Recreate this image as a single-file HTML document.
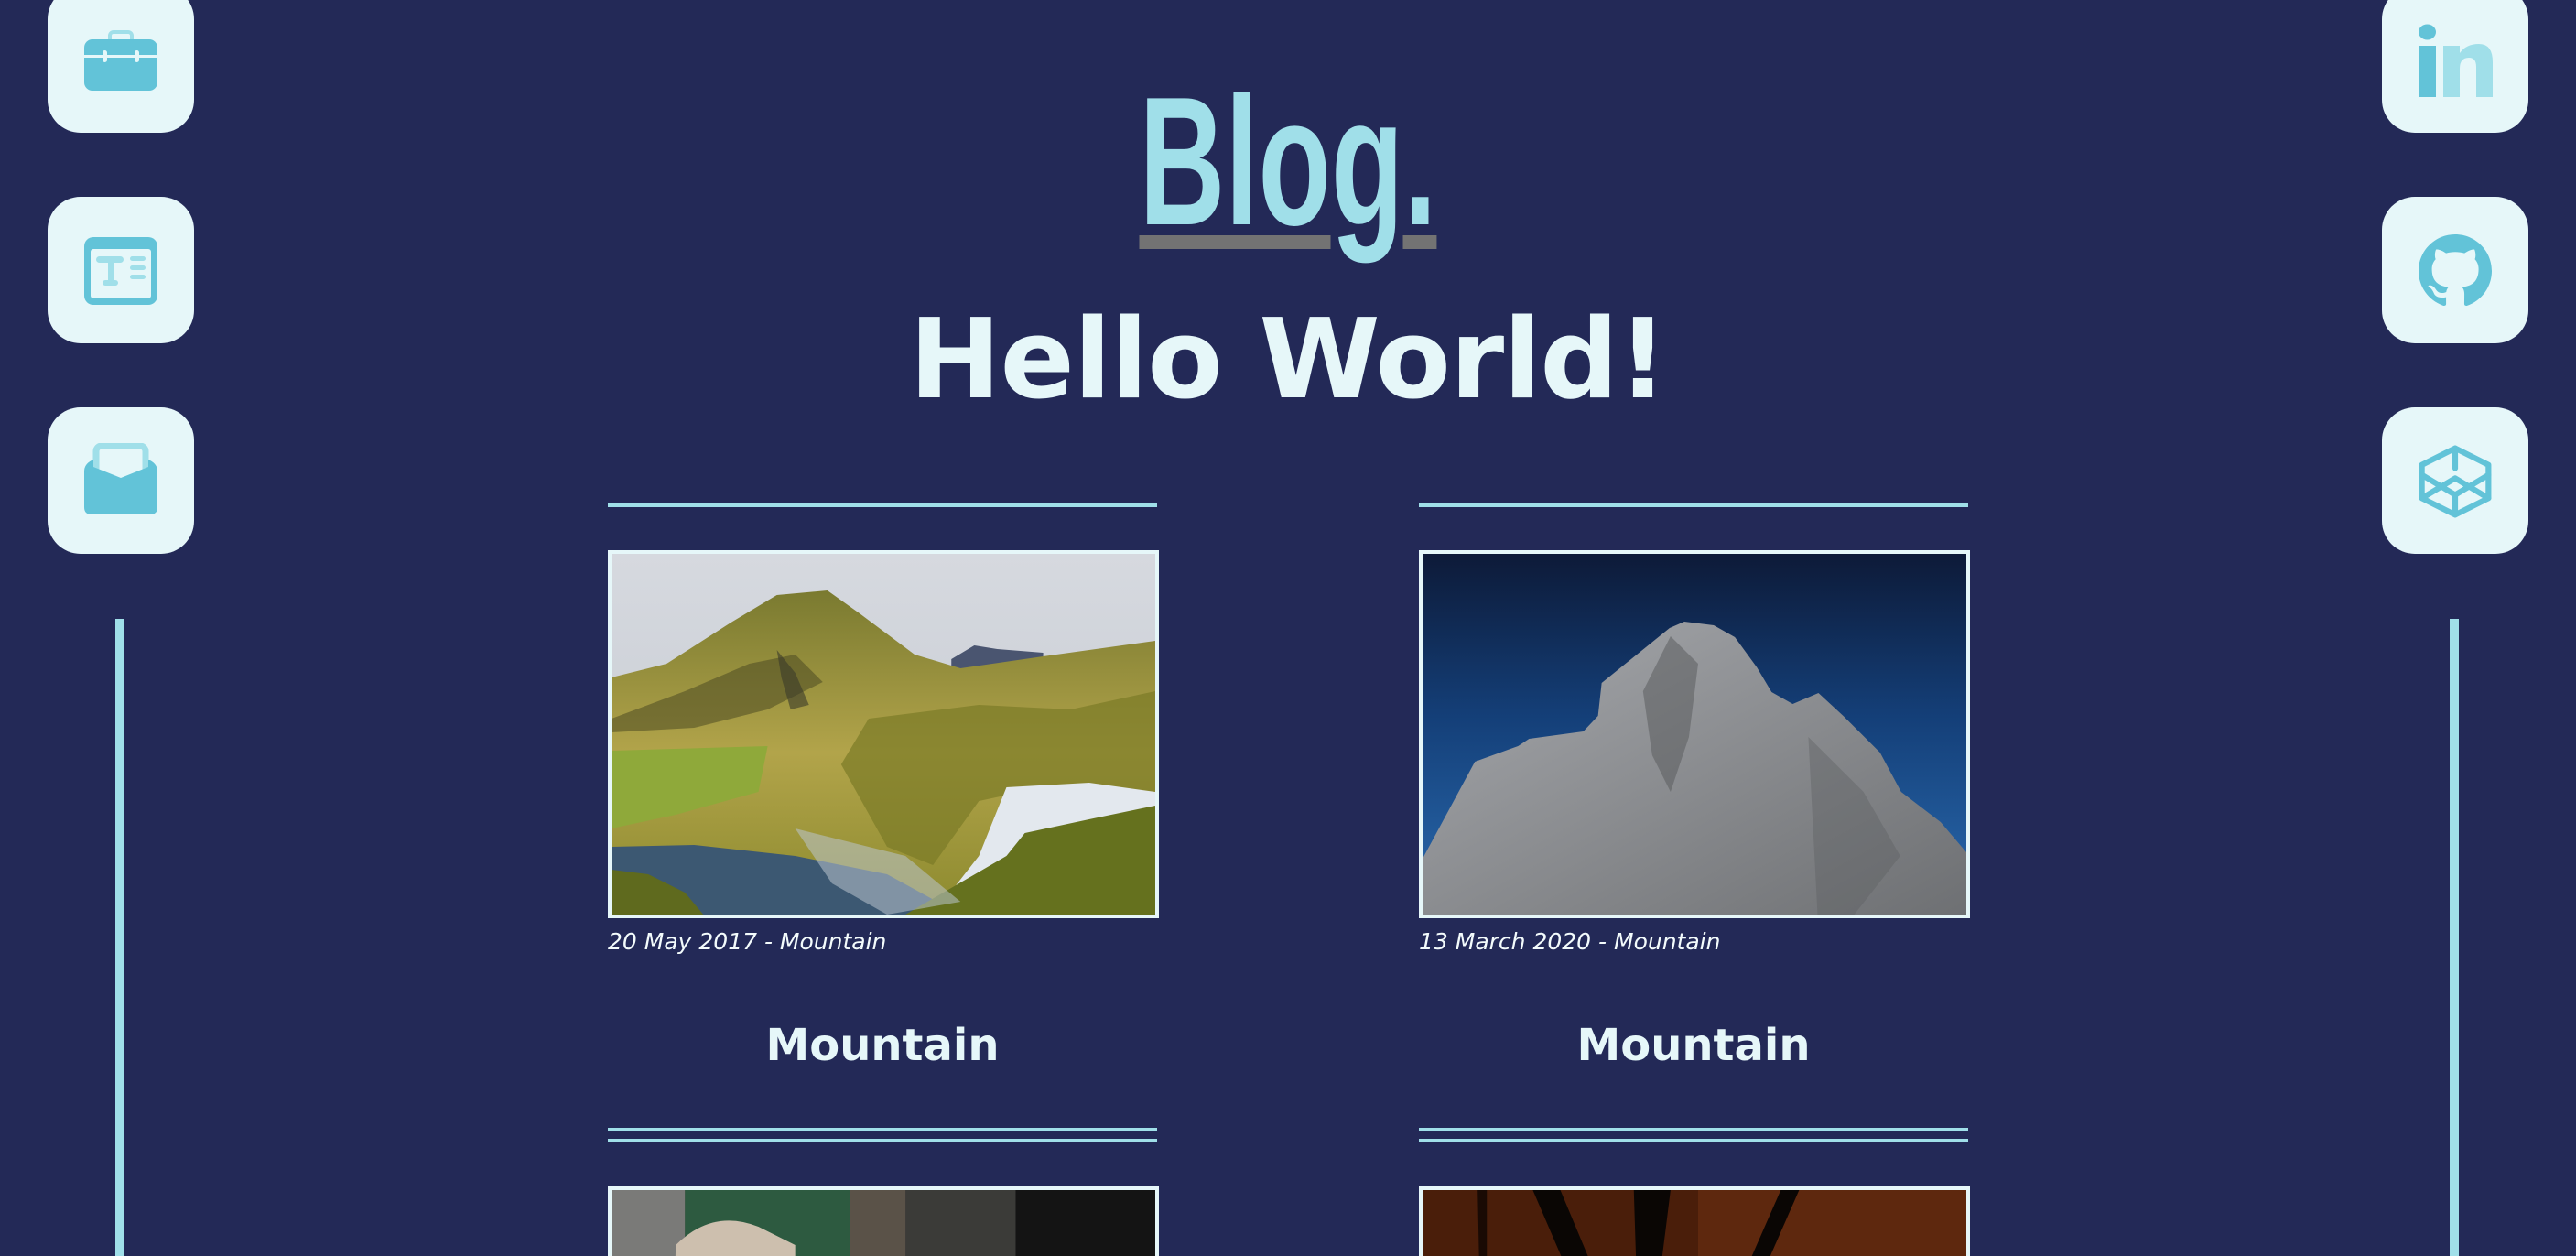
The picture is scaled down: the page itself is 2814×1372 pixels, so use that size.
<!DOCTYPE html>
<html><head><meta charset="utf-8"><style>
*{margin:0;padding:0;box-sizing:border-box}
html,body{width:2814px;height:1372px;overflow:hidden;background:#232957}
#wrap{position:relative;width:2814px;height:1372px;overflow:hidden;background:#232957}
.abs{position:absolute}
.box{position:absolute;width:160px;height:160px;border-radius:36px;background:#e6f7f9}
.vline{position:absolute;width:10px;top:676px;height:696px;background:#a0dfe9}
.hl{position:absolute;height:4px;background:#a0dfe9;width:600px}
.img{position:absolute;width:602px;height:402px;border:4px solid #e6f7f9;overflow:hidden}
.img svg{display:block;width:594px;height:394px}
.date{position:absolute;font-family:"DejaVu Sans",sans-serif;font-style:italic;font-size:25px;color:#f3fbfc;line-height:1}
.title{position:absolute;width:600px;text-align:center;font-family:"DejaVu Sans",sans-serif;font-weight:bold;font-size:48px;color:#e6f7f9;line-height:1}
</style></head><body><div id="wrap">

<div class="box" style="left:52px;top:-15px"></div>
<div class="box" style="left:52px;top:215px"></div>
<div class="box" style="left:52px;top:445px"></div>
<div class="vline" style="left:126px"></div>

<svg class="abs" style="left:92px;top:33px" width="80" height="66" viewBox="0 0 80 66">
<rect x="28" y="2" width="24" height="14" rx="4" fill="none" stroke="#a0dfe9" stroke-width="4"/>
<rect x="0" y="10" width="80" height="56" rx="9" fill="#62c3d8"/>
<rect x="0" y="27" width="80" height="3" fill="#e6f7f9"/>
<rect x="20" y="22" width="5" height="13" rx="2.5" fill="#e6f7f9"/>
<rect x="55" y="22" width="5" height="13" rx="2.5" fill="#e6f7f9"/>
</svg>

<svg class="abs" style="left:92px;top:259px" width="80" height="74" viewBox="0 0 80 74">
<rect x="0" y="0" width="80" height="74" rx="10" fill="#62c3d8"/>
<rect x="7" y="13" width="66" height="54" rx="3" fill="#e6f7f9"/>
<g fill="#a0dfe9">
<rect x="13" y="21" width="30" height="7" rx="3.5"/>
<rect x="26" y="21" width="7" height="32" rx="2"/>
<rect x="20" y="47" width="17" height="6" rx="3"/>
<rect x="50" y="21" width="17" height="5" rx="2.5"/>
<rect x="50" y="31" width="17" height="5" rx="2.5"/>
<rect x="50" y="41" width="17" height="5" rx="2.5"/>
</g>
</svg>

<svg class="abs" style="left:92px;top:484px" width="80" height="78" viewBox="0 0 80 78">
<rect x="13" y="3" width="54" height="50" rx="6" fill="#e6f7f9" stroke="#a0dfe9" stroke-width="7"/>
<path d="M8,19 L10,18 L10,26 L40,38 L70,26 L70,18 L72,19 Q80,23 80,31 L80,70 Q80,78 72,78 L8,78 Q0,78 0,70 L0,31 Q0,23 8,19 Z" fill="#62c3d8"/>
</svg>

<div class="box" style="left:2602px;top:-15px"></div>
<div class="box" style="left:2602px;top:215px"></div>
<div class="box" style="left:2602px;top:445px"></div>
<div class="vline" style="left:2676px"></div>

<svg class="abs" style="left:2642px;top:26px" width="81" height="80" viewBox="0 0 81 80">
<ellipse cx="9.5" cy="9" rx="9.5" ry="8.5" fill="#62c3d8"/>
<rect x="0" y="24" width="19" height="56" fill="#62c3d8"/>
<path d="M27,24 H45 V32 Q52,22 66,22 Q81,22 81,42 V80 H63 V47 Q63,37 55,37 Q45,37 45,49 V80 H27 Z" fill="#a0dfe9"/>
</svg>

<svg class="abs" style="left:2642px;top:256px" width="80" height="80" viewBox="0 0 16 16">
<path fill="#62c3d8" d="M8 0C3.58 0 0 3.58 0 8c0 3.54 2.29 6.53 5.47 7.59.4.07.55-.17.55-.38 0-.19-.01-.82-.01-1.49-2.01.37-2.53-.49-2.69-.94-.09-.23-.48-.94-.82-1.13-.28-.15-.68-.52-.01-.53.63-.01 1.08.58 1.23.82.72 1.21 1.87.87 2.33.66.07-.52.28-.87.51-1.070-1.78-.2-3.64-.89-3.64-3.95 0-.87.31-1.59.82-2.15-.08-.2-.36-1.02.08-2.12 0 0 .67-.21 2.2.82.64-.18 1.32-.27 2-.27.68 0 1.36.09 2 .27 1.53-1.04 2.2-.82 2.2-.82.44 1.1.16 1.92.08 2.12.51.56.82 1.27.82 2.15 0 3.07-1.87 3.75-3.65 3.95.29.25.54.73.54 1.48 0 1.07-.01 1.93-.01 2.2 0 .21.15.46.55.38A8.013 8.013 0 0016 8c0-4.42-3.58-8-8-8z"/>
</svg>

<svg class="abs" style="left:2642px;top:486px" width="80" height="80" viewBox="1 1 22 22" fill="none" stroke="#62c3d8" stroke-width="1.7" stroke-linejoin="round" stroke-linecap="round">
<polygon points="12 2 22 7 22 17 12 22 2 17 2 7 12 2"/>
<line x1="12" y1="22" x2="12" y2="16"/>
<polyline points="22 7 12 13 2 7" transform="translate(0,3)"/>
<polyline points="2 14 12 8 22 14" transform="translate(0,3)"/>
<line x1="12" y1="2" x2="12" y2="8"/>
</svg>

<div class="abs" style="left:1147px;top:77px;width:520px;text-align:center">
<span style="display:inline-block;transform:scaleX(0.65);font-family:'Liberation Sans',sans-serif;font-weight:bold;font-size:200px;line-height:1;color:#a0dfe9;text-decoration:underline;text-decoration-color:#737373;text-decoration-thickness:15px;text-underline-offset:12px;text-decoration-skip-ink:auto">Blog.</span>
</div>
<div class="abs" style="left:0;top:334px;width:2814px;text-align:center;font-family:'DejaVu Sans',sans-serif;font-weight:bold;font-size:120px;line-height:1;color:#e6f7f9;letter-spacing:-1px">Hello World!</div>

<div class="hl" style="left:664px;top:550px"></div>
<div class="img" style="left:664px;top:601px">
<svg viewBox="0 0 592 394" preserveAspectRatio="none">
<defs><linearGradient id="sk" x1="0" y1="0" x2="0" y2="1"><stop offset="0" stop-color="#d6d9df"/><stop offset="1" stop-color="#c3c8d0"/></linearGradient>
<linearGradient id="mt" x1="0" y1="0" x2="0" y2="1"><stop offset="0" stop-color="#7a7a30"/><stop offset="0.5" stop-color="#b2a44a"/><stop offset="1" stop-color="#8c8a2e"/></linearGradient></defs>
<rect width="592" height="394" fill="url(#sk)"/>
<path d="M370,115 L395,100 L420,104 L470,108 L470,130 L370,130 Z" fill="#4a5570"/>
<path d="M0,135 L60,120 L130,75 L180,45 L235,40 L270,65 L330,110 L380,125 L470,112 L592,95 L592,394 L0,394 Z" fill="url(#mt)"/>
<path d="M0,180 L80,150 L150,120 L200,110 L230,140 L170,170 L90,190 L0,195 Z" fill="#4c4a22" opacity="0.55"/>
<path d="M180,105 L200,130 L215,165 L195,170 L185,135 Z" fill="#3a3a2a" opacity="0.6"/>
<path d="M0,215 L170,210 L160,260 L70,285 L0,300 Z" fill="#8fa93a"/>
<path d="M280,180 L400,165 L500,170 L592,150 L592,260 L470,255 L400,270 L350,340 L300,320 L250,230 Z" fill="#7b7a26" opacity="0.7"/>
<path d="M0,320 L90,318 L200,330 L300,350 L380,394 L0,394 Z" fill="#3c5872"/>
<path d="M430,255 L520,250 L592,260 L592,295 L500,305 L470,330 L440,394 L350,394 L400,330 Z" fill="#e3e8ee"/>
<path d="M320,394 L430,330 L450,305 L520,290 L592,275 L592,394 Z" fill="#65711e"/>
<path d="M0,345 L40,350 L80,370 L100,394 L0,394 Z" fill="#5f6a1e"/>
<path d="M200,300 L320,330 L380,380 L300,394 L240,360 Z" fill="#b9c4ce" opacity="0.55"/>
</svg></div>
<div class="date" style="left:664px;top:1016px">20 May 2017 - Mountain</div>
<div class="title" style="left:664px;top:1118px">Mountain</div>
<div class="hl" style="left:664px;top:1232px"></div>
<div class="hl" style="left:664px;top:1244px"></div>
<div class="img" style="left:664px;top:1296px">
<svg viewBox="0 0 592 394" preserveAspectRatio="none">
<rect width="592" height="394" fill="#3b3b38"/>
<rect x="0" width="80" height="394" fill="#7a7a78"/>
<rect x="80" width="180" height="394" fill="#2d5a40"/>
<path d="M70,60 Q110,20 160,40 L200,60 L200,394 L60,394 Z" fill="#cdbfae"/>
<rect x="260" width="60" height="394" fill="#5a5248"/>
<rect x="440" width="152" height="394" fill="#141414"/>
</svg></div>

<div class="hl" style="left:1550px;top:550px"></div>
<div class="img" style="left:1550px;top:601px">
<svg viewBox="0 0 592 394" preserveAspectRatio="none">
<defs><linearGradient id="sk2" x1="0" y1="0" x2="0" y2="1"><stop offset="0" stop-color="#0d1a38"/><stop offset="0.45" stop-color="#143f78"/><stop offset="1" stop-color="#2a6bb0"/></linearGradient>
<linearGradient id="rk" x1="0" y1="0" x2="1" y2="1"><stop offset="0" stop-color="#a7a9ad"/><stop offset="1" stop-color="#6e7073"/></linearGradient></defs>
<rect width="592" height="394" fill="url(#sk2)"/>
<polygon points="0,333 57,227 104,210 116,202 175,194 191,177 195,141 269,81 285,74 317,78 340,91 364,124 380,151 403,164 431,152 458,177 498,217 521,260 564,293 592,326 592,394 0,394" fill="url(#rk)"/>
<path d="M270,90 L300,120 L290,200 L270,260 L250,220 L240,150 Z" fill="#55575a" opacity="0.5"/>
<path d="M420,200 L480,260 L520,330 L470,394 L430,394 Z" fill="#5c5e61" opacity="0.4"/>
</svg></div>
<div class="date" style="left:1550px;top:1016px">13 March 2020 - Mountain</div>
<div class="title" style="left:1550px;top:1118px">Mountain</div>
<div class="hl" style="left:1550px;top:1232px"></div>
<div class="hl" style="left:1550px;top:1244px"></div>
<div class="img" style="left:1550px;top:1296px">
<svg viewBox="0 0 592 394" preserveAspectRatio="none">
<rect width="592" height="394" fill="#4a1e0a"/>
<rect x="300" width="292" height="394" fill="#5e280e"/>
<path d="M120,0 L150,0 L200,120 L180,140 Z" fill="#0a0604"/>
<path d="M230,0 L270,0 L250,160 L235,160 Z" fill="#0a0604"/>
<path d="M390,0 L410,0 L340,160 L320,160 Z" fill="#0a0604"/>
<path d="M60,0 L70,0 L70,100 L62,100 Z" fill="#1a0a04"/>
</svg></div>

</div></body></html>
